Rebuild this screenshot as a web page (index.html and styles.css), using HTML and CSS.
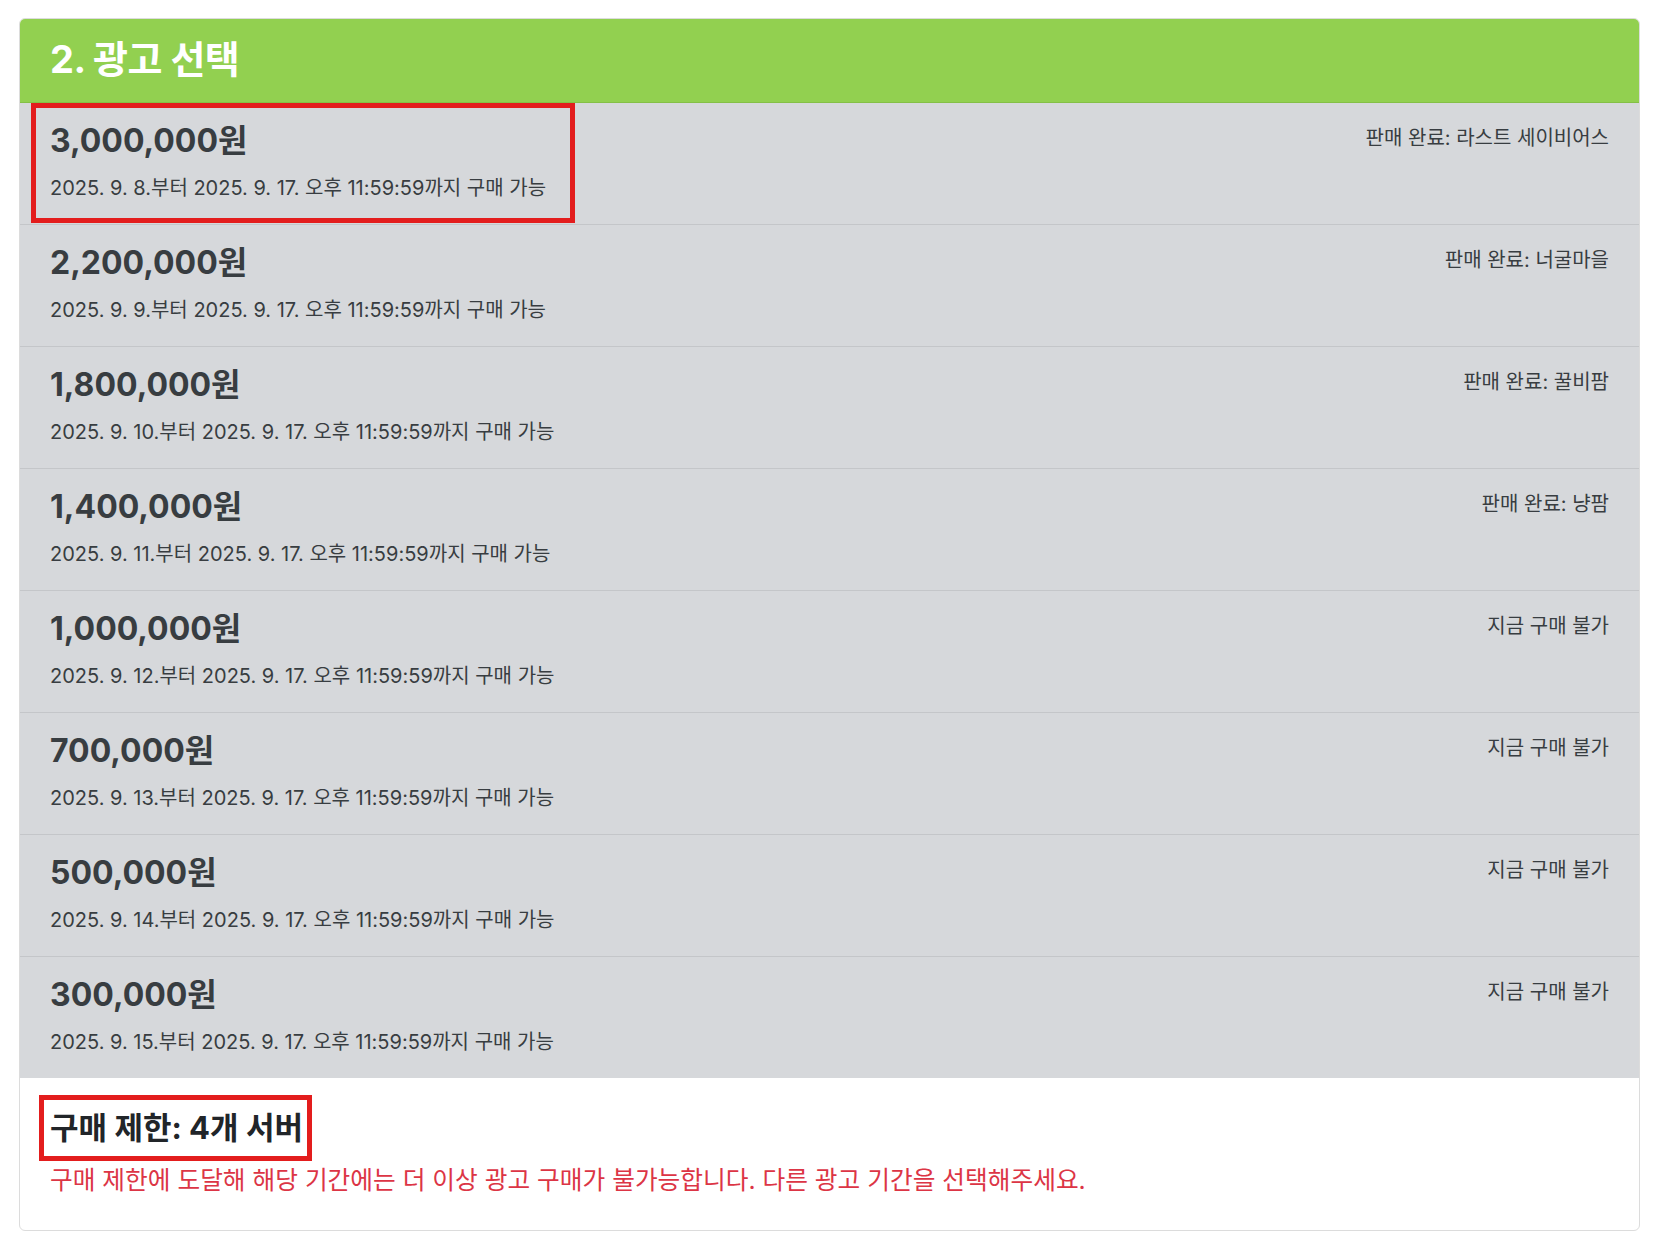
FILE: index.html
```html
<!DOCTYPE html>
<html lang="ko">
    <head>
        <meta charset="utf-8">
        <meta name="viewport" content="width=device-width, initial-scale=1.0">
        <title>광고 선택</title>
        <link rel="stylesheet" href="styles.css">
    </head>
    <body>
        <main>
            <section class="card">
                <h2 class="card-title">2. 광고 선택</h2>
                <ul class="slots">
                    <li class="slot">
                        <span class="mark mark-slot"></span>
                        <div class="slot-info">
                            <h3 class="price">3,000,000원</h3>
                            <p class="period">2025. 9. 8.부터 2025. 9. 17. 오후 11:59:59까지 구매 가능</p>
                        </div>
                        <p class="status">판매 완료: 라스트 세이비어스</p>
                    </li>
                    <li class="slot">
                        <div class="slot-info">
                            <h3 class="price">2,200,000원</h3>
                            <p class="period">2025. 9. 9.부터 2025. 9. 17. 오후 11:59:59까지 구매 가능</p>
                        </div>
                        <p class="status">판매 완료: 너굴마을</p>
                    </li>
                    <li class="slot">
                        <div class="slot-info">
                            <h3 class="price">1,800,000원</h3>
                            <p class="period">2025. 9. 10.부터 2025. 9. 17. 오후 11:59:59까지 구매 가능</p>
                        </div>
                        <p class="status">판매 완료: 꿀비팜</p>
                    </li>
                    <li class="slot">
                        <div class="slot-info">
                            <h3 class="price">1,400,000원</h3>
                            <p class="period">2025. 9. 11.부터 2025. 9. 17. 오후 11:59:59까지 구매 가능</p>
                        </div>
                        <p class="status">판매 완료: 냥팜</p>
                    </li>
                    <li class="slot">
                        <div class="slot-info">
                            <h3 class="price">1,000,000원</h3>
                            <p class="period">2025. 9. 12.부터 2025. 9. 17. 오후 11:59:59까지 구매 가능</p>
                        </div>
                        <p class="status">지금 구매 불가</p>
                    </li>
                    <li class="slot">
                        <div class="slot-info">
                            <h3 class="price">700,000원</h3>
                            <p class="period">2025. 9. 13.부터 2025. 9. 17. 오후 11:59:59까지 구매 가능</p>
                        </div>
                        <p class="status">지금 구매 불가</p>
                    </li>
                    <li class="slot">
                        <div class="slot-info">
                            <h3 class="price">500,000원</h3>
                            <p class="period">2025. 9. 14.부터 2025. 9. 17. 오후 11:59:59까지 구매 가능</p>
                        </div>
                        <p class="status">지금 구매 불가</p>
                    </li>
                    <li class="slot">
                        <div class="slot-info">
                            <h3 class="price">300,000원</h3>
                            <p class="period">2025. 9. 15.부터 2025. 9. 17. 오후 11:59:59까지 구매 가능</p>
                        </div>
                        <p class="status">지금 구매 불가</p>
                    </li>
                </ul>
                <div class="limit">
                    <span class="mark mark-limit"></span>
                    <h4 class="limit-title">구매 제한: 4개 서버</h4>
                    <p class="limit-warning">구매 제한에 도달해 해당 기간에는 더 이상 광고 구매가 불가능합니다. 다른 광고 기간을 선택해주세요.</p>
                </div>
            </section>
        </main>
    </body>
</html>
```

FILE: styles.css
```css
html, body, h2, h3, h4, p, ul, li {
    margin: 0;
    padding: 0;
}
ul {
    list-style: none;
}

body {
    font-family: Inter, "Noto Sans CJK KR", sans-serif;
    background: #fff;
    color: #212529;
}
main {
    padding: 18px 19px;
}

.card {
    border: 1px solid #dcdcdc;
    border-radius: 6px;
    overflow: hidden;
}
.card-title {
    background: #92d050;
    color: #fff;
    font-size: 38px;
    font-weight: 700;
    line-height: 44px;
    padding: 18px 30px 21px;
    border-bottom: 1px solid #84c046;
    letter-spacing: -0.5px;
}

.slot {
    position: relative;
    display: flex;
    justify-content: space-between;
    align-items: flex-start;
    background: #d6d8db;
    color: #383d41;
    padding: 19px 30px 22px;
    border-bottom: 1px solid #c4c6c9;
}
.slot:last-child {
    border-bottom: 0;
}
.price {
    font-size: 32px;
    font-weight: 700;
    line-height: 38px;
    margin-bottom: 14px;
}
.period {
    font-size: 20px;
    line-height: 28px;
}
.status {
    font-size: 20px;
    line-height: 28px;
    margin-top: 2px;
}

.limit {
    position: relative;
    padding: 31px 30px 32px;
}
.limit-title {
    font-size: 31px;
    font-weight: 700;
    line-height: 37px;
    margin-bottom: 16px;
}
.limit-warning {
    color: #dc3545;
    font-size: 24.7px;
    line-height: 36px;
}

/* red annotation boxes drawn over the screenshot */
.mark {
    position: absolute;
    border: 5px solid #e31d1d;
    pointer-events: none;
}
.mark-slot {
    left: 11px;
    top: 0;
    width: 534px;
    height: 110px;
}
.mark-limit {
    left: 19px;
    top: 17px;
    width: 263px;
    height: 56px;
}
```
